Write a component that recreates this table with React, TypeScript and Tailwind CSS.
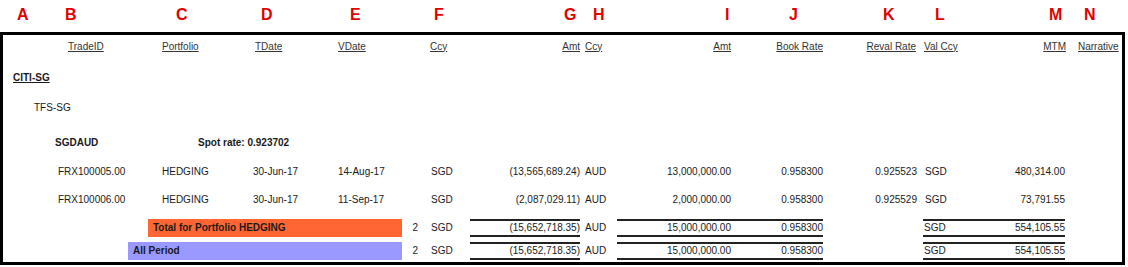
import React from "react";

const letters: [string, number][] = [
  ["A", 48], ["B", 111], ["C", 85], ["D", 89], ["E", 84], ["F", 130], ["G", 29],
  ["H", 132], ["I", 64], ["J", 94], ["K", 52], ["L", 114], ["M", 35], ["N", 40],
];

const trades = [
  { id: "FRX100005.00", tdate: "30-Jun-17", vdate: "14-Aug-17", amt: "(13,565,689.24)", amt2: "13,000,000.00", reval: "0.925523", mtm: "480,314.00" },
  { id: "FRX100006.00", tdate: "30-Jun-17", vdate: "11-Sep-17", amt: "(2,087,029.11)", amt2: "2,000,000.00", reval: "0.925529", mtm: "73,791.55" },
];

const TotalRow = ({ label, indent, width, color, mt }: { label: string; indent: string; width: string; color: string; mt: string }) => (
  <div className={`flex h-[18px] items-stretch ${mt}`}>
    <div className={indent} />
    <div className={`${width} ${color} flex items-center pl-[5px] font-bold text-[#1a1a1a]`}>{label}</div>
    <div className="w-[22px] flex items-center justify-end pr-[6px]">2</div>
    <div className="w-[41px] flex items-center pl-[7px]">SGD</div>
    <div className="w-[116px] pl-[5px] pr-[1px]">
      <div className="h-full border-y-2 border-[#222] flex items-center justify-end">(15,652,718.35)</div>
    </div>
    <div className="w-[31px] flex items-center pl-[4px]">AUD</div>
    <div className="w-[213px] pl-[5px] pr-[2px]">
      <div className="h-full border-y-2 border-[#222] flex items-center">
        <div className="w-[116px] text-right pr-[2px]">15,000,000.00</div>
        <div className="flex-1 text-right">0.958300</div>
      </div>
    </div>
    <div className="w-[95px]" />
    <div className="w-[148px] pl-[3px] pr-[3px]">
      <div className="h-full border-y-2 border-[#222] flex items-center justify-between pl-[1px]">
        <span>SGD</span>
        <span>554,105.55</span>
      </div>
    </div>
  </div>
);

const App = () => {
  return (
    <div className="w-[1128px] h-[267px] bg-white overflow-hidden" style={{ fontFamily: '"Liberation Sans", Arial, sans-serif' }}>
      {/* column letters */}
      <div className="flex h-[32px] pl-[17px] pt-[5px] text-[16px] leading-[20px] font-bold text-[#e00000]">
        {letters.map(([l, w]) => (
          <div key={l} style={{ width: w }}>{l}</div>
        ))}
      </div>

      {/* report box */}
      <div className="w-[1125px] h-[233px] border-[3px] border-black text-[10px] leading-[12px] text-[#1a1a1a]">
        {/* header */}
        <div className="flex h-[23px] items-center text-[#333] underline underline-offset-[1px]">
          <div className="w-[52px]" />
          <div className="w-[93px] pl-[13px]">TradeID</div>
          <div className="w-[97px] pl-[14px]">Portfolio</div>
          <div className="w-[85px] pl-[10px]">TDate</div>
          <div className="w-[72px] pl-[8px]">VDate</div>
          <div className="w-[22px]" />
          <div className="w-[41px] pl-[6px]">Ccy</div>
          <div className="w-[116px] text-right pr-[1px]">Amt</div>
          <div className="w-[31px] pl-[4px]">Ccy</div>
          <div className="w-[121px] text-right pr-[2px]">Amt</div>
          <div className="w-[92px] text-right pr-[2px]">Book Rate</div>
          <div className="w-[95px] text-right pr-[4px]">Reval Rate</div>
          <div className="w-[45px] pl-[4px]">Val Ccy</div>
          <div className="w-[103px] text-right pr-[2px]">MTM</div>
          <div className="w-[54px] pl-[10px]">Narrative</div>
        </div>

        <div className="flex h-[20px] items-center mt-[10px] pl-[10px] font-bold underline underline-offset-[1px]">CITI-SG</div>
        <div className="flex h-[20px] items-center mt-[10px] pl-[31px]">TFS-SG</div>
        <div className="flex h-[20px] items-center mt-[15px] font-bold">
          <div className="w-[52px]" />
          <div className="w-[143px]">SGDAUD</div>
          <div>Spot rate: 0.923702</div>
        </div>

        {trades.map((t, i) => (
          <div key={t.id} className={`flex h-[20px] items-center ${i === 0 ? "mt-[9px]" : "mt-[8px]"}`}>
            <div className="w-[52px]" />
            <div className="w-[93px] pl-[3px]">{t.id}</div>
            <div className="w-[97px] pl-[14px]">HEDGING</div>
            <div className="w-[85px] pl-[8px]">{t.tdate}</div>
            <div className="w-[72px] pl-[8px]">{t.vdate}</div>
            <div className="w-[22px]" />
            <div className="w-[41px] pl-[7px]">SGD</div>
            <div className="w-[116px] text-right pr-[1px]">{t.amt}</div>
            <div className="w-[31px] pl-[4px]">AUD</div>
            <div className="w-[121px] text-right pr-[2px]">{t.amt2}</div>
            <div className="w-[92px] text-right pr-[2px]">0.958300</div>
            <div className="w-[95px] text-right pr-[3px]">{t.reval}</div>
            <div className="w-[45px] pl-[5px]">SGD</div>
            <div className="w-[103px] text-right pr-[3px]">{t.mtm}</div>
            <div className="w-[54px]" />
          </div>
        ))}

        <TotalRow label="Total for Portfolio HEDGING" indent="w-[145px]" width="w-[254px]" color="bg-[#ff6633]" mt="mt-[9px]" />
        <TotalRow label="All Period" indent="w-[125px]" width="w-[274px]" color="bg-[#9999ff]" mt="mt-[5px]" />
      </div>
    </div>
  );
};

export default App;
